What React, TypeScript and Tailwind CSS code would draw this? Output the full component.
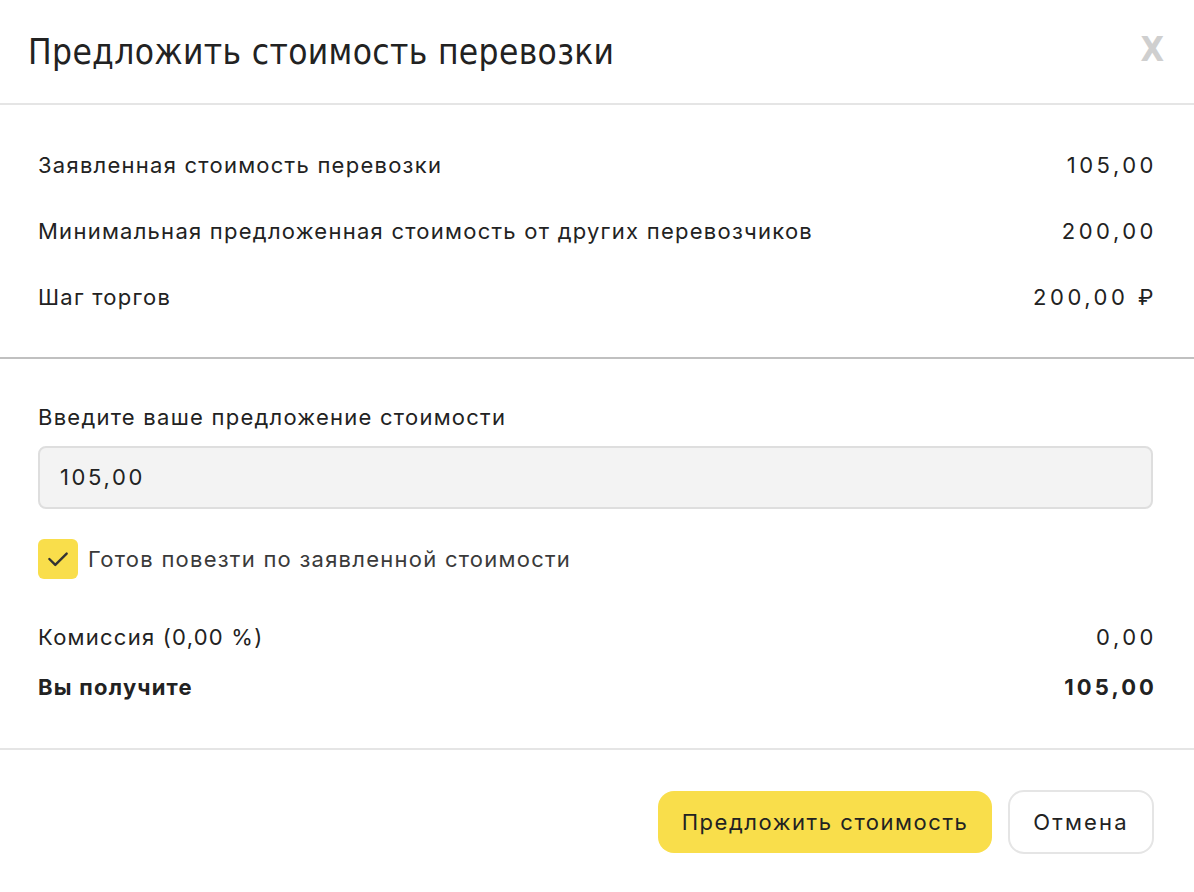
const rows = [
  { label: "Заявленная стоимость перевозки", value: "105,00" },
  { label: "Минимальная предложенная стоимость от других перевозчиков", value: "200,00" },
  { label: "Шаг торгов", value: "200,00 ₽" },
];

export default function App() {
  return (
    <div className="h-[892px] w-[1194px] overflow-hidden bg-white text-[#222] tracking-[0.078em] [font-family:Inter,'Noto_Sans',sans-serif]">
      <header className="flex h-[105px] items-center justify-between border-b-2 border-[#e5e5e5] pl-[28px] pr-[30px] tracking-normal">
        <h1 className="pt-[2px] text-[35px] tracking-[0.01em] text-[#222] [font-family:'DejaVu_Sans_Condensed','DejaVu_Sans',sans-serif]">
          Предложить стоимость перевозки
        </h1>
        <button type="button" className="mb-[6px] text-[34px] font-bold leading-none text-[#cfcfcf] [font-family:'DejaVu_Sans_Condensed',sans-serif]">
          X
        </button>
      </header>

      <section className="border-b-2 border-[#c0c0c0] pl-[38px] pr-[37px] py-[27px]">
        {rows.map((row) => (
          <div key={row.label} className="flex h-[66px] items-center justify-between text-[22px]">
            <span>{row.label}</span>
            <span className="tracking-[0.16em]">{row.value}</span>
          </div>
        ))}
      </section>

      <section className="border-b-2 border-[#e5e5e5] pl-[38px] pr-[37px] pt-[43px] pb-[45px]">
        <label className="block text-[22px] leading-[30px]">Введите ваше предложение стоимости</label>
        <div className="mt-[14px] mr-[4px] flex h-[63px] items-center rounded-[8px] border-2 border-[#dedede] bg-[#f3f3f3] px-[20px] text-[22px] tracking-[0.12em]">
          105,00
        </div>
        <div className="mt-[30px] flex items-center gap-[10px]">
          <span className="flex h-[40px] w-[40px] items-center justify-center rounded-[6px] bg-[#f9de4b]">
            <svg width="26" height="26" viewBox="0 0 24 24" fill="none" stroke="#333" strokeWidth="2.2" strokeLinecap="round" strokeLinejoin="round">
              <path d="M4 12l5.5 5.5L20 7" />
            </svg>
          </span>
          <span className="text-[22px] text-[#3a3a3a]">Готов повезти по заявленной стоимости</span>
        </div>
        <div className="mt-[42px] flex items-center justify-between text-[22px] leading-[32px]">
          <span>Комиссия (0,00 %)</span>
          <span className="tracking-[0.16em]">0,00</span>
        </div>
        <div className="mt-[18px] flex items-center justify-between text-[22px] font-bold leading-[32px]">
          <span>Вы получите</span>
          <span className="tracking-[0.14em]">105,00</span>
        </div>
      </section>

      <footer className="flex justify-end gap-[16px] px-[40px] pt-[41px]">
        <button type="button" className="h-[62px] w-[334px] rounded-[16px] bg-[#f9de4b] text-[22px] tracking-[0.07em] text-[#222]">
          Предложить стоимость
        </button>
        <button type="button" className="h-[64px] w-[146px] -mt-[1px] rounded-[16px] border-2 border-[#e5e5e5] bg-white text-[22px] tracking-[0.1em] text-[#222]">
          Отмена
        </button>
      </footer>
    </div>
  );
}
